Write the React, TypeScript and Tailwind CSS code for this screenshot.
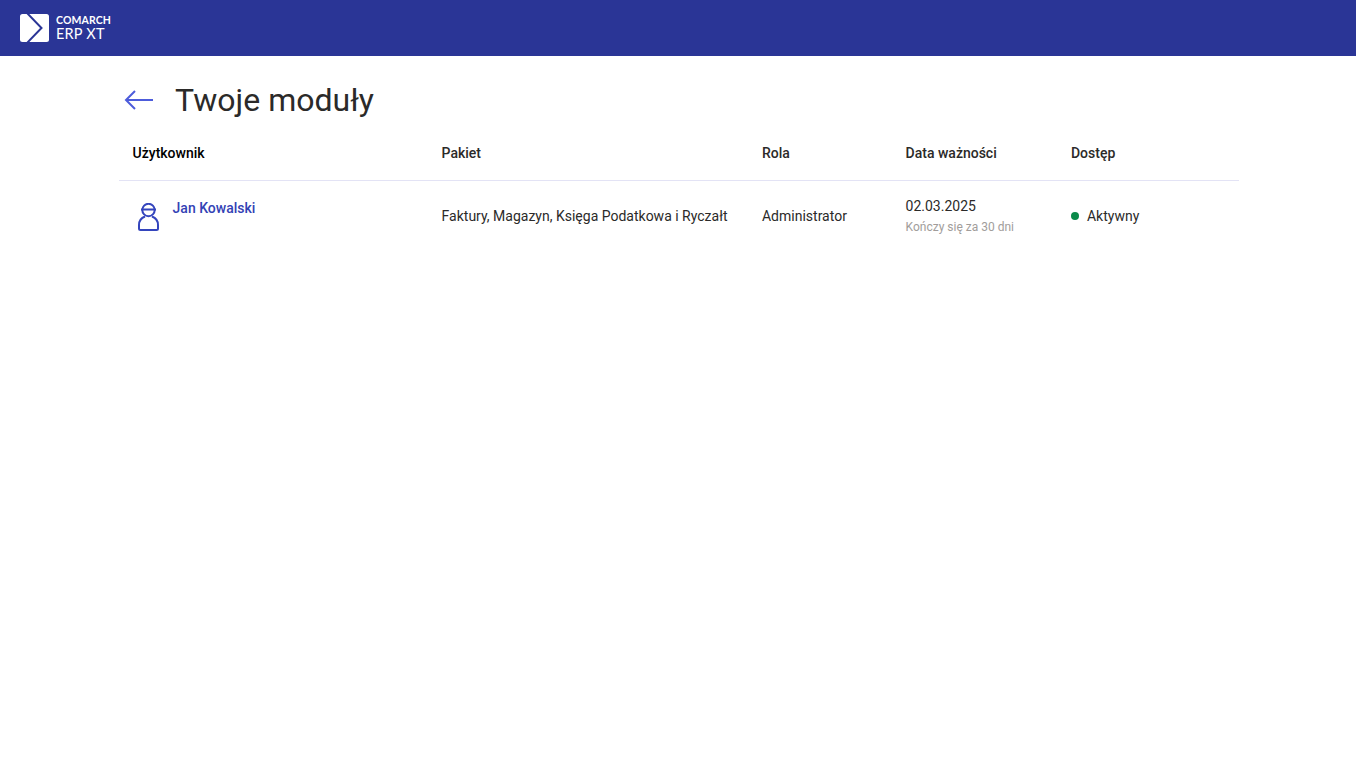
export default function App() {
  return (
    <div className="min-h-[763px] bg-white font-['Roboto',sans-serif] text-[14px] text-[#2b2a29]">
      <header className="flex h-14 items-center bg-[#2a3596] pl-5">
        <svg width="29" height="28" viewBox="0 0 29 28" className="shrink-0">
          <rect width="29" height="28" rx="2.500" fill="#fff" />
          <path d="M7 -1 21.500 14 7 29" fill="none" stroke="#2a3596" strokeWidth="2" />
        </svg>
        <div className="ml-[7px] flex flex-col font-['Lato',sans-serif] text-white">
          <span className="text-[10.500px] leading-[11px] font-bold tracking-[0.1px]">COMARCH</span>
          <span className="text-[14.500px] leading-[16px] font-normal tracking-[0.2px]">ERP XT</span>
        </div>
      </header>
      <main className="ml-[118.600px] w-[1120px]">
        <div className="flex h-[88px] items-center">
          <svg width="30" height="22" viewBox="0 0 30 22" fill="none" stroke="#4d5cdb" strokeWidth="2" className="ml-[5px] shrink-0">
            <path d="M29 11H2" />
            <path d="M11 2 2 11l9 9" />
          </svg>
          <h1 className="ml-[21.500px] text-[32px] leading-none font-normal">Twoje moduły</h1>
        </div>
        <div className="flex h-[37px] items-start border-b border-[#e3e3f5] font-medium">
          <div className="w-[323px] pl-[14px] leading-[18px] text-black">Użytkownik</div>
          <div className="w-[320.400px] leading-[18px]">Pakiet</div>
          <div className="w-[143.600px] leading-[18px]">Rola</div>
          <div className="w-[165.400px] leading-[18px]">Data ważności</div>
          <div className="leading-[18px]">Dostęp</div>
        </div>
        <div className="flex h-[70px] items-center">
          <div className="flex w-[323px] items-start pl-[18px]">
            <svg width="23" height="29" viewBox="0 0 23 29" fill="none" stroke="#3445bd" strokeWidth="2" className="mt-[3px] shrink-0">
              <circle cx="11.500" cy="7" r="6.200" />
              <path d="M4 6.500h15" />
              <path d="M8 13.500C4 15 2 18.500 2 22v3.500a1.500 1.500 0 0 0 1.500 1.500h16a1.500 1.500 0 0 0 1.500-1.500V22c0-3.500-2-7-6-8.500" />
            </svg>
            <span className="ml-[13px] -mt-px leading-[18px] font-medium text-[#3342b5]">Jan Kowalski</span>
          </div>
          <div className="w-[320.400px]">Faktury, Magazyn, Księga Podatkowa i Ryczałt</div>
          <div className="w-[143.600px]">Administrator</div>
          <div className="flex w-[165.400px] flex-col pt-px">
            <span className="leading-[20px]">02.03.2025</span>
            <span className="mt-px text-[12px] leading-[20px] text-[#a19d9b]">Kończy się za 30 dni</span>
          </div>
          <div className="flex items-center">
            <span className="h-2 w-2 rounded-full bg-[#0a8a4a]" />
            <span className="ml-2">Aktywny</span>
          </div>
        </div>
      </main>
    </div>
  );
}
